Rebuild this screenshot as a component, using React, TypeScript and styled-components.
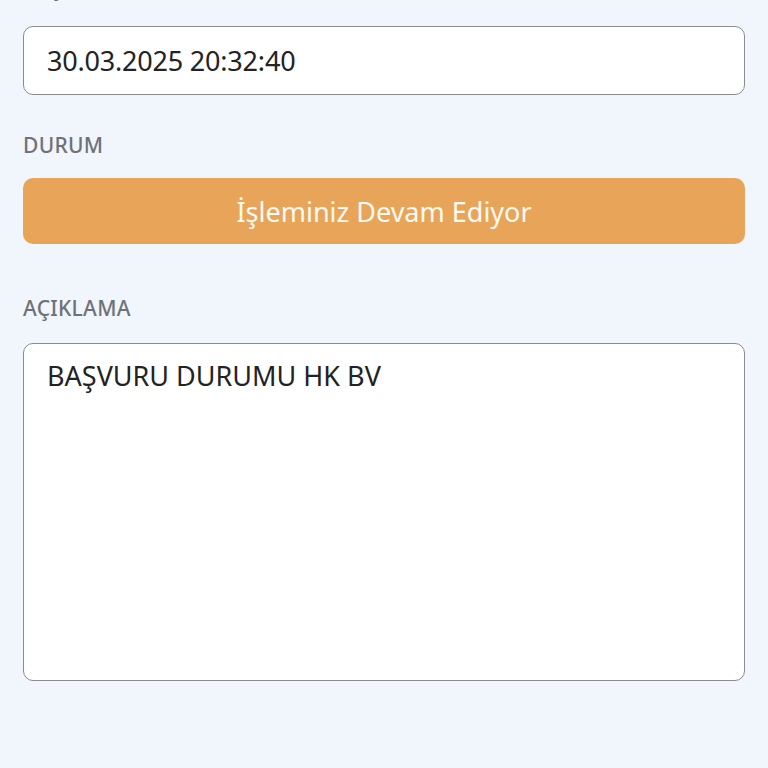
import React from "react";
import styled, { createGlobalStyle } from "styled-components";

const Global = createGlobalStyle`
  html, body {
    margin: 0;
    padding: 0;
    background: #f1f5fc;
  }
  body {
    font-family: "Noto Sans", "Open Sans", sans-serif;
  }
  * { box-sizing: border-box; }
`;

const Page = styled.div`
  width: 768px;
  height: 768px;
  overflow: hidden;
  background: #f1f5fc;
  padding: 0 23px;
  display: flex;
  flex-direction: column;
`;

const Inner = styled.div`
  margin-top: -24px;
  display: flex;
  flex-direction: column;
`;

const Group = styled.div<{ $after: number }>`
  display: flex;
  flex-direction: column;
  margin-bottom: ${(p) => p.$after}px;
`;

const Label = styled.div<{ $gap: number }>`
  font-size: 21px;
  line-height: 24px;
  font-weight: 500;
  color: #6e7277;
  letter-spacing: 0.3px;
  margin-bottom: ${(p) => p.$gap}px;
`;

const Field = styled.div`
  height: 69px;
  background: #ffffff;
  border: 1.5px solid #8a8c90;
  border-radius: 10px;
  display: flex;
  align-items: center;
  padding: 0 23px;
  font-size: 27px;
  color: #232323;
  letter-spacing: -0.2px;
`;

const StatusBar = styled.div`
  height: 66px;
  background: #e8a55a;
  border-radius: 10px;
  display: flex;
  align-items: center;
  justify-content: center;
  color: #fffaf2;
  font-size: 27px;
  letter-spacing: 0;
`;

const TextBox = styled.div`
  height: 338px;
  background: #ffffff;
  border: 1.5px solid #8a8c90;
  border-radius: 10px;
  padding: 15px 23px;
  font-size: 27px;
  line-height: 34px;
  color: #232323;
`;

export default function App() {
  return (
    <>
      <Global />
      <Page>
        <Inner>
          <Group $after={38}>
            <Label $gap={26}>BAŞVURU TARİHİ</Label>
            <Field>30.03.2025 20:32:40</Field>
          </Group>
          <Group $after={52}>
            <Label $gap={21}>DURUM</Label>
            <StatusBar>İşleminiz Devam Ediyor</StatusBar>
          </Group>
          <Group $after={0}>
            <Label $gap={23}>AÇIKLAMA</Label>
            <TextBox>BAŞVURU DURUMU HK BV</TextBox>
          </Group>
        </Inner>
      </Page>
    </>
  );
}
